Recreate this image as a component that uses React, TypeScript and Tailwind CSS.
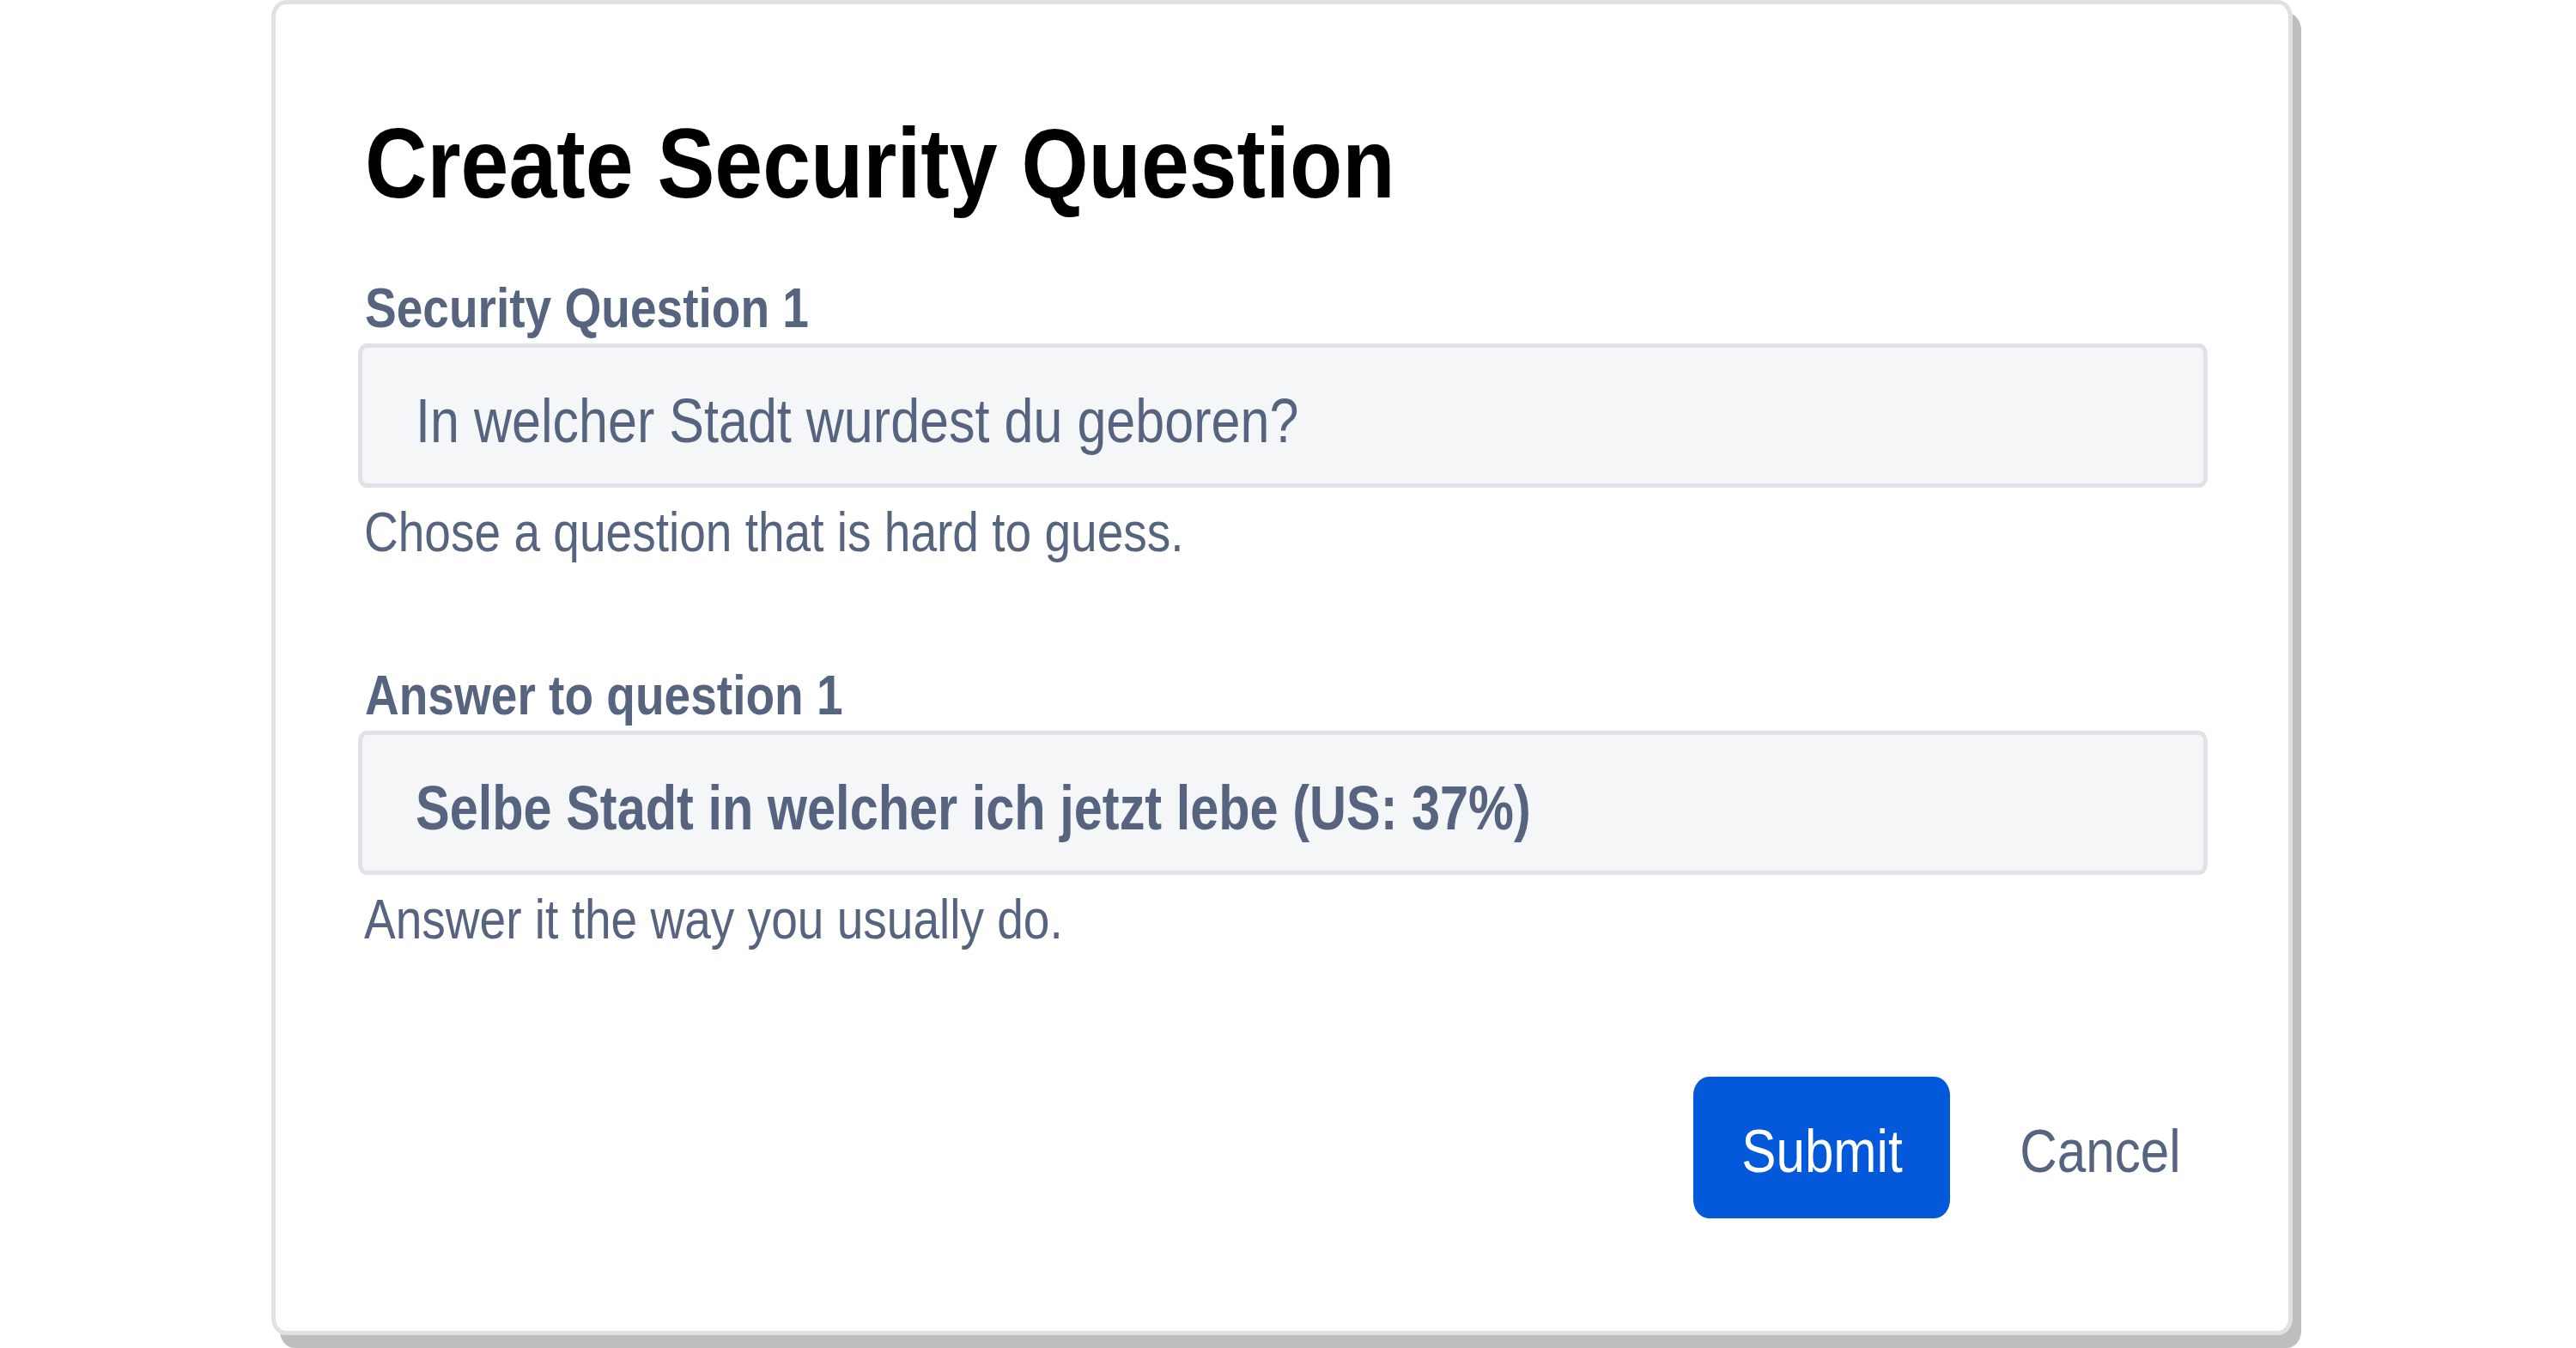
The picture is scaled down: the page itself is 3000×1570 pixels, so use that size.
import React from 'react';

const font = { fontFamily: '"Liberation Sans", Arial, sans-serif' };

// reference text is a narrow grotesque; squeeze Liberation Sans to match
const Narrow: React.FC<{ children: React.ReactNode; className?: string }> = ({ children, className }) => (
  <span className={'inline-block whitespace-nowrap ' + (className ?? 'origin-left scale-x-[0.86]')}>{children}</span>
);

const Field: React.FC<{ label: string; value: string; hint: string; strong?: boolean; first?: boolean }> = ({
  label,
  value,
  hint,
  strong,
  first,
}) => (
  <div className={first ? 'flex flex-col mt-[79px]' : 'flex flex-col mt-[126px]'}>
    <div className="h-[64px] pl-[8px] text-[64px] leading-none font-bold text-[#57647f]">
      <Narrow>{label}</Narrow>
    </div>
    <div className="mt-[9px] h-[168px] flex items-center pt-[12px] pl-[62px] rounded-[10px/12px] border-[5px] border-[#e1e2e7] bg-[#f5f6f8]">
      {strong ? (
        <div className="h-[72px] text-[72px] leading-none font-bold text-[#57647f]">
          <Narrow className="origin-left scale-x-[0.826]">{value}</Narrow>
        </div>
      ) : (
        <div className="h-[72px] text-[72px] leading-none text-[#57647f]">
          <Narrow className="origin-left scale-x-[0.848]">{value}</Narrow>
        </div>
      )}
    </div>
    <div className="mt-[20px] h-[64px] pl-[7px] text-[64px] leading-none text-[#57647f]">
      <Narrow>{hint}</Narrow>
    </div>
  </div>
);

export default function App() {
  return (
    <div className="min-h-screen bg-white" style={font}>
      <div className="ml-[316px] w-[2354px] h-[1555px] flex flex-col pt-[128px] pl-[96px] pr-[94px] rounded-[17px/20px] border-[5px] border-[#e0e1e5] bg-white shadow-[10px_15px_0_0_#bebebe]">
        <h1 className="h-[115px] pl-[8px] text-[115px] leading-none font-bold text-black">
          <Narrow className="origin-left scale-x-[0.873]">Create Security Question</Narrow>
        </h1>

        <Field
          first
          label="Security Question 1"
          value="In welcher Stadt wurdest du geboren?"
          hint="Chose a question that is hard to guess."
        />
        <Field
          strong
          label="Answer to question 1"
          value="Selbe Stadt in welcher ich jetzt lebe (US: 37%)"
          hint="Answer it the way you usually do."
        />

        <div className="mt-[151px] flex justify-end items-center">
          <button className="w-[299px] h-[165px] flex items-center justify-center pt-[9px] rounded-[18px/22px] bg-[#0359d9] text-white text-[70px] leading-none">
            <Narrow className="origin-center scale-x-[0.86]">Submit</Narrow>
          </button>
          <button className="ml-[50px] w-[250px] h-[165px] flex items-center justify-center pt-[9px] text-[#57647f] text-[70px] leading-none">
            <Narrow className="origin-center scale-x-[0.86]">Cancel</Narrow>
          </button>
        </div>
      </div>
    </div>
  );
}
